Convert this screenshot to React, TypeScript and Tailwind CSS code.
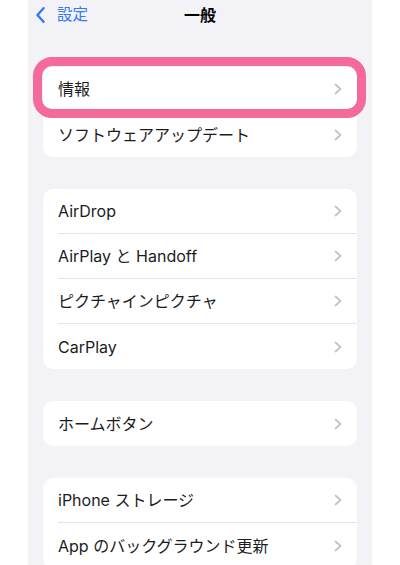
import React from 'react';

const font = { fontFamily: 'Inter, "Noto Sans CJK JP", sans-serif' };

function Chevron() {
  return (
    <svg width="8" height="12" viewBox="0 0 8 12" fill="none" className="shrink-0">
      <path d="M1.5 1.5 L6.5 6 L1.5 10.5" stroke="#c4c4c7" strokeWidth="1.8" strokeLinecap="round" strokeLinejoin="round" />
    </svg>
  );
}

function Row({ label, last }: { label: string; last?: boolean }) {
  return (
    <div className="flex h-[45px] items-stretch pl-[15px]">
      <div
        className={`flex flex-1 items-center justify-between pr-[15px] ${
          last ? '' : 'border-b border-[#e4e4e7]'
        }`}
      >
        <span className="text-[16px] leading-none text-[#1c1c1e]">{label}</span>
        <Chevron />
      </div>
    </div>
  );
}

function Group({ items, highlight }: { items: string[]; highlight?: boolean }) {
  return (
    <div className="relative mx-[15px] shrink-0 rounded-[10px] bg-white">
      {items.map((item, i) => (
        <Row key={item} label={item} last={i === items.length - 1} />
      ))}
      {highlight && (
        <div className="pointer-events-none absolute -left-[10px] -top-[10px] h-[61px] w-[333px] rounded-[19px] border-[9px] border-[#f46a9b]" />
      )}
    </div>
  );
}

export default function App() {
  return (
    <div className="flex h-[565px] w-full justify-center overflow-hidden bg-white" style={font}>
      <div className="flex h-full w-[344px] flex-col overflow-hidden bg-[#f2f2f7]">
        {/* Nav bar */}
        <div className="relative flex h-[30px] shrink-0 items-center">
          <div className="flex items-center gap-[12px] pl-[8px]">
            <svg width="9" height="16" viewBox="0 0 9 16" fill="none">
              <path d="M7.5 1.2 L1.5 8 L7.5 14.8" stroke="#3478f6" strokeWidth="2.4" strokeLinecap="round" strokeLinejoin="round" />
            </svg>
            <span className="text-[15.5px] leading-none text-[#3478f6]">設定</span>
          </div>
          <span className="absolute left-1/2 -translate-x-1/2 text-[16px] font-bold leading-none text-black">
            一般
          </span>
        </div>

        <div className="mt-[37px] flex shrink-0 flex-col gap-[32px]">
          <Group items={['情報', 'ソフトウェアアップデート']} highlight />
          <Group items={['AirDrop', 'AirPlay と Handoff', 'ピクチャインピクチャ', 'CarPlay']} />
          <Group items={['ホームボタン']} />
          <Group items={['iPhone ストレージ', 'App のバックグラウンド更新']} />
        </div>
      </div>
    </div>
  );
}
